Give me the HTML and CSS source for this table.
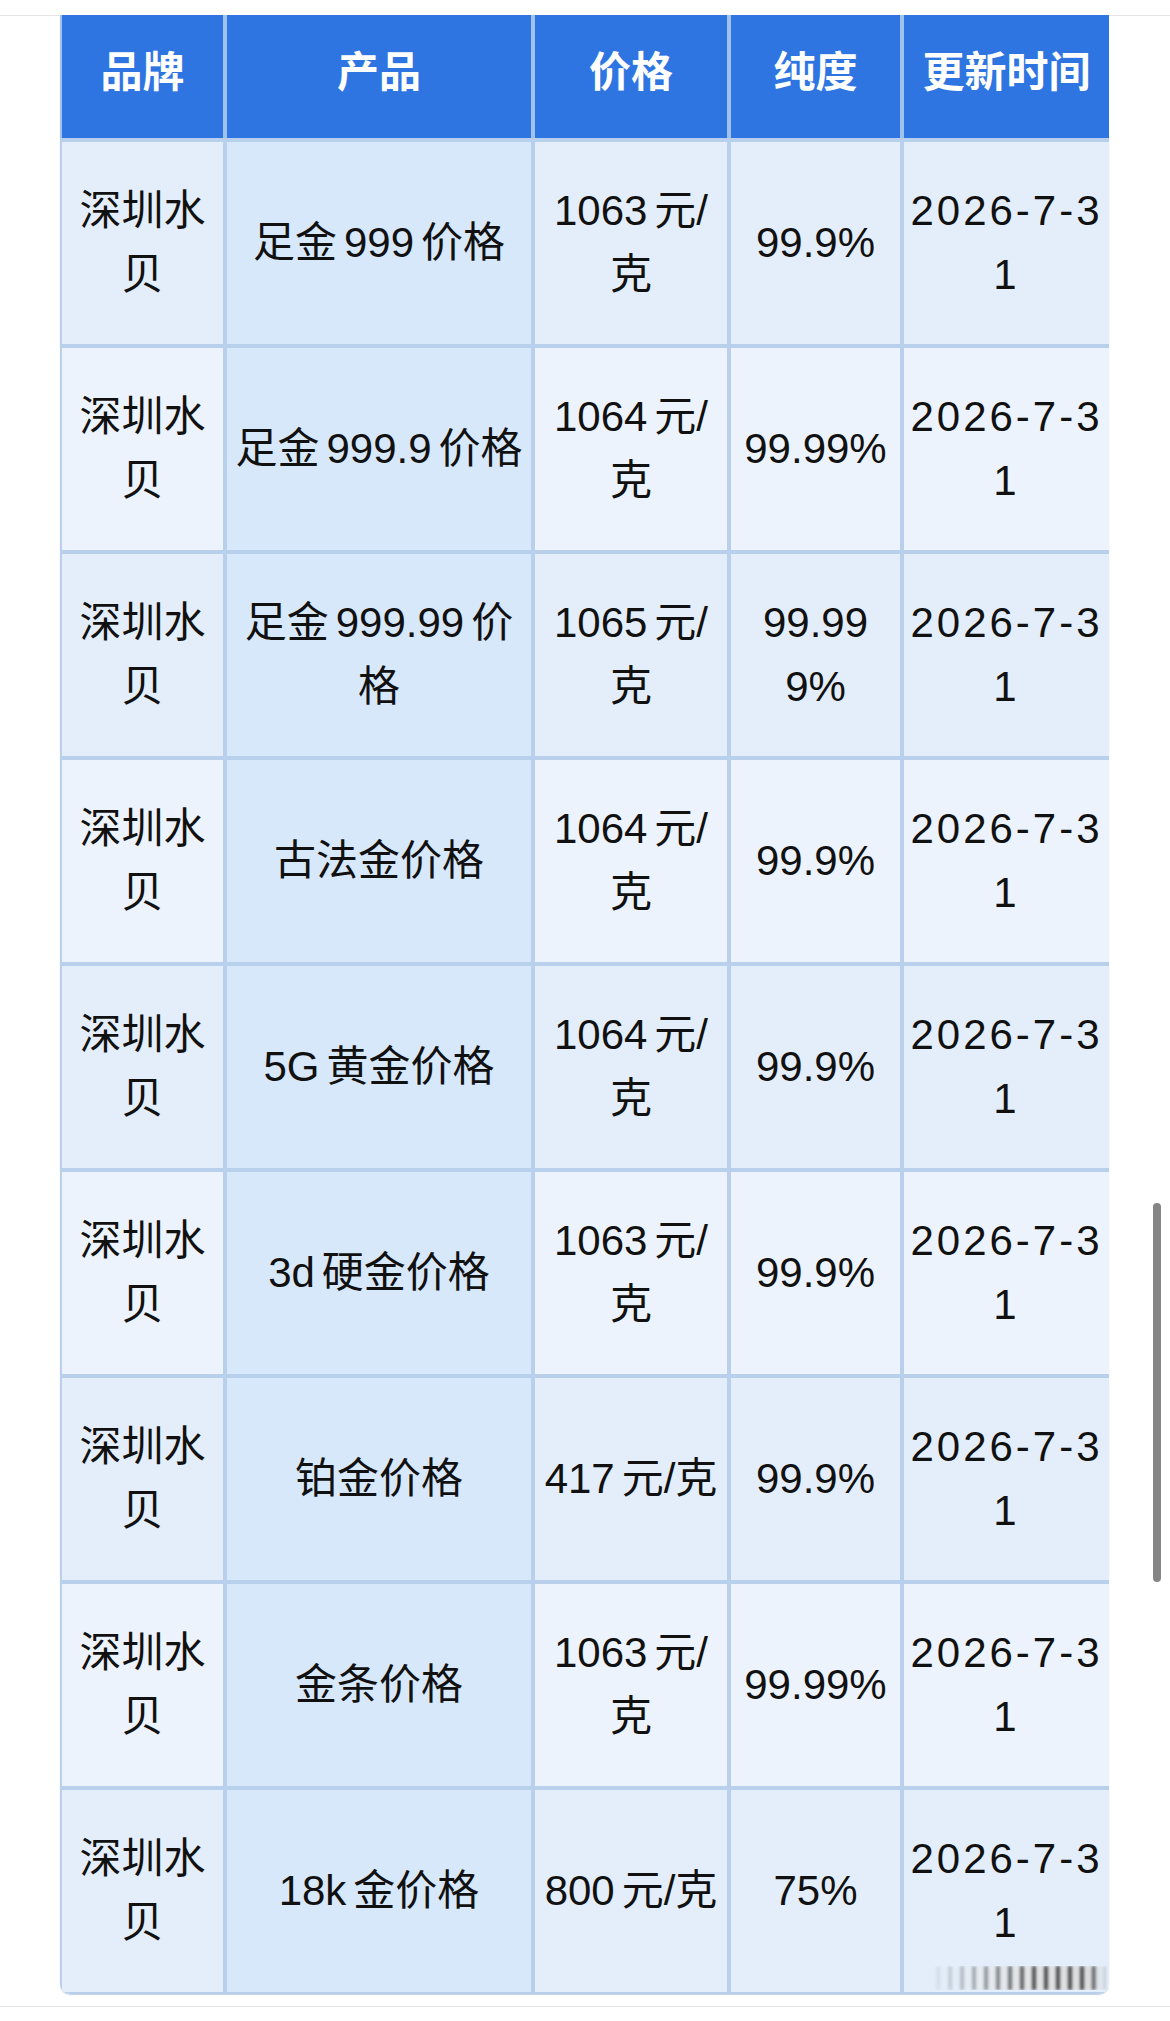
FILE: index.html
```html
<!DOCTYPE html>
<html lang="zh-CN">
<head>
<meta charset="utf-8">
<title>深圳水贝金价</title>
<link rel="stylesheet" href="styles.css">
</head>
<body>
<div class="frame">
  <div class="table-wrap">
    <table class="price-table">
      <colgroup>
        <col class="c-brand">
        <col class="c-prod">
        <col class="c-price">
        <col class="c-pure">
        <col class="c-date">
      </colgroup>
      <thead>
        <tr>
          <th>品牌</th>
          <th>产品</th>
          <th>价格</th>
          <th>纯度</th>
          <th>更新时间</th>
        </tr>
      </thead>
      <tbody>
        <tr>
          <td>深圳水贝</td>
          <td class="prod">足金&#8198;999&#8198;价格</td>
          <td class="price">1063&#8198;元/克</td>
          <td class="pure">99.9%</td>
          <td class="date">2026-7-31</td>
        </tr>
        <tr>
          <td>深圳水贝</td>
          <td class="prod">足金&#8198;999.9&#8198;价格</td>
          <td class="price">1064&#8198;元/克</td>
          <td class="pure">99.99%</td>
          <td class="date">2026-7-31</td>
        </tr>
        <tr>
          <td>深圳水贝</td>
          <td class="prod">足金&#8198;999.99&#8198;价格</td>
          <td class="price">1065&#8198;元/克</td>
          <td class="pure">99.999%</td>
          <td class="date">2026-7-31</td>
        </tr>
        <tr>
          <td>深圳水贝</td>
          <td class="prod">古法金价格</td>
          <td class="price">1064&#8198;元/克</td>
          <td class="pure">99.9%</td>
          <td class="date">2026-7-31</td>
        </tr>
        <tr>
          <td>深圳水贝</td>
          <td class="prod">5G&#8198;黄金价格</td>
          <td class="price">1064&#8198;元/克</td>
          <td class="pure">99.9%</td>
          <td class="date">2026-7-31</td>
        </tr>
        <tr>
          <td>深圳水贝</td>
          <td class="prod">3d&#8198;硬金价格</td>
          <td class="price">1063&#8198;元/克</td>
          <td class="pure">99.9%</td>
          <td class="date">2026-7-31</td>
        </tr>
        <tr>
          <td>深圳水贝</td>
          <td class="prod">铂金价格</td>
          <td class="price">417&#8198;元/克</td>
          <td class="pure">99.9%</td>
          <td class="date">2026-7-31</td>
        </tr>
        <tr>
          <td>深圳水贝</td>
          <td class="prod">金条价格</td>
          <td class="price">1063&#8198;元/克</td>
          <td class="pure">99.99%</td>
          <td class="date">2026-7-31</td>
        </tr>
        <tr>
          <td>深圳水贝</td>
          <td class="prod">18k&#8198;金价格</td>
          <td class="price">800&#8198;元/克</td>
          <td class="pure">75%</td>
          <td class="date">2026-7-31</td>
        </tr>
      </tbody>
    </table>
  </div>
  <div class="watermark" aria-hidden="true"></div>
</div>
<div class="scrollbar" aria-hidden="true"></div>
</body>
</html>
```

FILE: styles.css
```css
html, body {
  margin: 0;
  padding: 0;
  background: #ffffff;
}

body {
  font-family: "Liberation Sans", "Noto Sans CJK SC", sans-serif;
  color: #111111;
  width: 1170px;
  height: 2021px;
  overflow: hidden;
  position: relative;
}

.frame {
  margin-top: 15px;
  border-top: 1px solid #e4e4e4;
  border-bottom: 1px solid #e4e4e4;
  padding: 0 0 12px 60px;
  position: relative;
}

.table-wrap {
  width: 1049px;
  margin-top: -1px;
  border-radius: 0 0 10px 10px;
  overflow: hidden;
  box-shadow: 0 1px 1px rgba(90, 120, 160, 0.35);
}

.price-table {
  width: 1049px;
  table-layout: fixed;
  border-collapse: collapse;
  font-size: 42px;
  line-height: 64px;
  text-align: center;
}

.c-brand { width: 164px; }
.c-prod  { width: 308px; }
.c-price { width: 196px; }
.c-pure  { width: 173px; }
.c-date  { width: 208px; }

.price-table th,
.price-table td {
  border: 4px solid #b8d0ec;
  padding: 0 6px;
  vertical-align: middle;
  word-break: break-all;
  overflow-wrap: anywhere;
}

.price-table td.prod {
  padding: 0 4px;
}

.price-table td.date {
  padding: 0 2px;
  letter-spacing: 3px;
}

.price-table th:first-child,
.price-table td:first-child {
  border-left-width: 2px;
}

.price-table th:last-child,
.price-table td:last-child {
  border-right-width: 2px;
}

.price-table th {
  height: 115px;
  padding-bottom: 8px;
  background: #2e75e2;
  color: #ffffff;
  font-weight: 700;
  border-top: 0;
  border-left-color: #9fc1ee;
  border-right-color: #9fc1ee;
  border-bottom-color: #b8d0ec;
}

.price-table td {
  height: 202px;
  background: #e3eefa;
}

.price-table tbody tr:nth-child(even) td {
  background: #ecf3fc;
}

.price-table td.prod,
.price-table tbody tr:nth-child(even) td.prod {
  background: #d8e8fb;
}

.price-table tbody tr:last-child td {
  border-bottom-width: 2px;
}

.watermark {
  position: absolute;
  right: 62px;
  bottom: 16px;
  width: 180px;
  height: 24px;
  background:
    repeating-linear-gradient(90deg, rgba(255,255,255,0) 0 8px, rgba(30,30,30,0.75) 8px 12px),
    linear-gradient(90deg, rgba(240,240,240,0.2) 0%, rgba(230,230,230,0.9) 30%, rgba(215,215,215,0.9) 100%);
  -webkit-mask-image: linear-gradient(90deg, transparent 0%, rgba(0,0,0,0.5) 30%, #000 60%, #000 90%, transparent 100%);
  mask-image: linear-gradient(90deg, transparent 0%, rgba(0,0,0,0.5) 30%, #000 60%, #000 90%, transparent 100%);
  filter: blur(1.5px);
}

.scrollbar {
  position: absolute;
  left: 1153px;
  top: 1203px;
  width: 8px;
  height: 379px;
  border-radius: 4px;
  background: #858585;
}
```
